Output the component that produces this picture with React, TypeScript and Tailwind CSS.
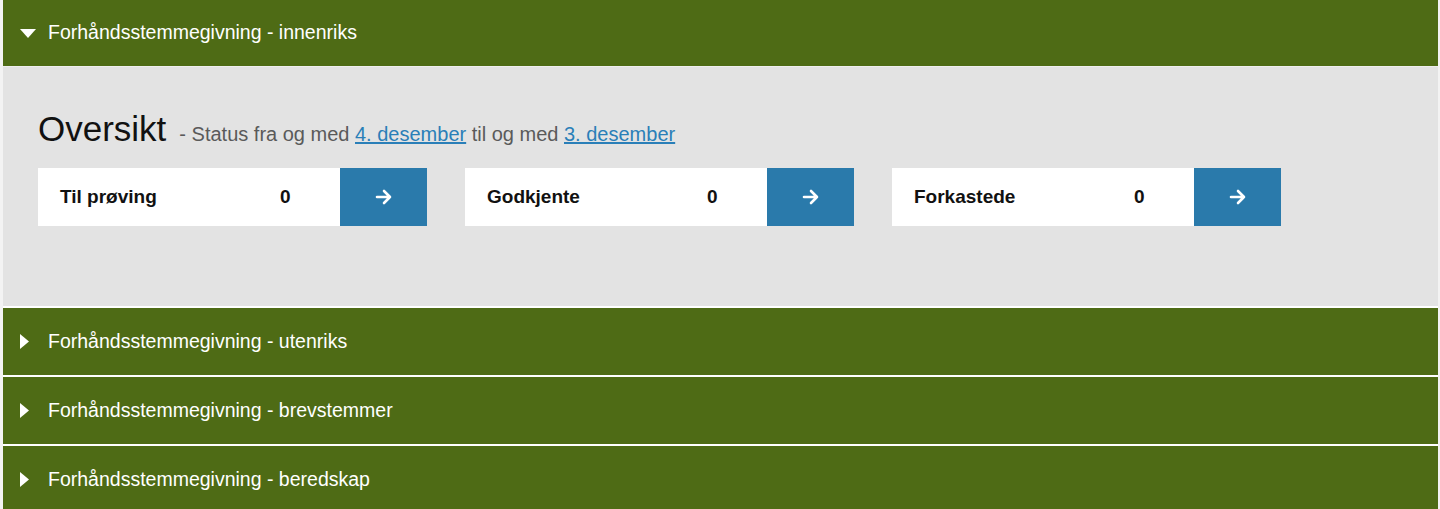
const font = { fontFamily: '"Liberation Sans", Arial, sans-serif' };

function ArrowRight() {
  return (
    <svg width="18" height="16" viewBox="0 0 18 16" fill="none">
      <path d="M2 8h13M9 2l6 6-6 6" stroke="white" strokeWidth="2.6" strokeLinecap="round" strokeLinejoin="round" />
    </svg>
  );
}

function SectionHeader({ title, open }: { title: string; open?: boolean }) {
  return (
    <div className={`flex items-center bg-[#4e6b15] text-white text-[19.5px] ${open ? "h-[66px]" : "h-[67px]"}`}>
      <div className="w-[45px] pl-[17px]">
        {open ? (
          <svg width="16" height="9" viewBox="0 0 16 9">
            <path d="M0 0h16L8 9z" fill="white" />
          </svg>
        ) : (
          <svg width="9" height="15" viewBox="0 0 9 15">
            <path d="M0 0l9 7.5L0 15z" fill="white" />
          </svg>
        )}
      </div>
      <span>{title}</span>
    </div>
  );
}

function StatCard({ label }: { label: string }) {
  return (
    <div className="flex h-[58px]">
      <div className="w-[302px] bg-white flex items-center pl-[22px] text-[19px] font-bold text-[#111]">
        <span className="w-[220px]">{label}</span>
        <span>0</span>
      </div>
      <button className="w-[87px] bg-[#2a7aab] flex items-center justify-center">
        <ArrowRight />
      </button>
    </div>
  );
}

export default function App() {
  const collapsed = ["utenriks", "brevstemmer", "beredskap"];
  return (
    <div className="w-[1440px] h-[509px] overflow-hidden bg-[#f3f3f3] pl-[3px] pr-[2px]" style={font}>
      <SectionHeader title="Forhåndsstemmegivning - innenriks" open />
      <div className="h-[240px] bg-[#e3e3e3] border-t border-[#eeeeee] pl-[35px] pt-[44px]">
        <div className="flex items-baseline h-[57px]">
          <h1 className="text-[35px] text-[#111] leading-none mr-[13px]">Oversikt</h1>
          <span className="text-[20px] text-[#5a5a5a]">
            - Status fra og med{" "}
            <a className="text-[#2a7fb8] underline">4. desember</a> til og med{" "}
            <a className="text-[#2a7fb8] underline">3. desember</a>
          </span>
        </div>
        <div className="flex gap-[38px]">
          <StatCard label="Til prøving" />
          <StatCard label="Godkjente" />
          <StatCard label="Forkastede" />
        </div>
      </div>
      {collapsed.map((c) => (
        <div key={c} className="border-t-[2px] border-white">
          <SectionHeader title={`Forhåndsstemmegivning - ${c}`} />
        </div>
      ))}
    </div>
  );
}
